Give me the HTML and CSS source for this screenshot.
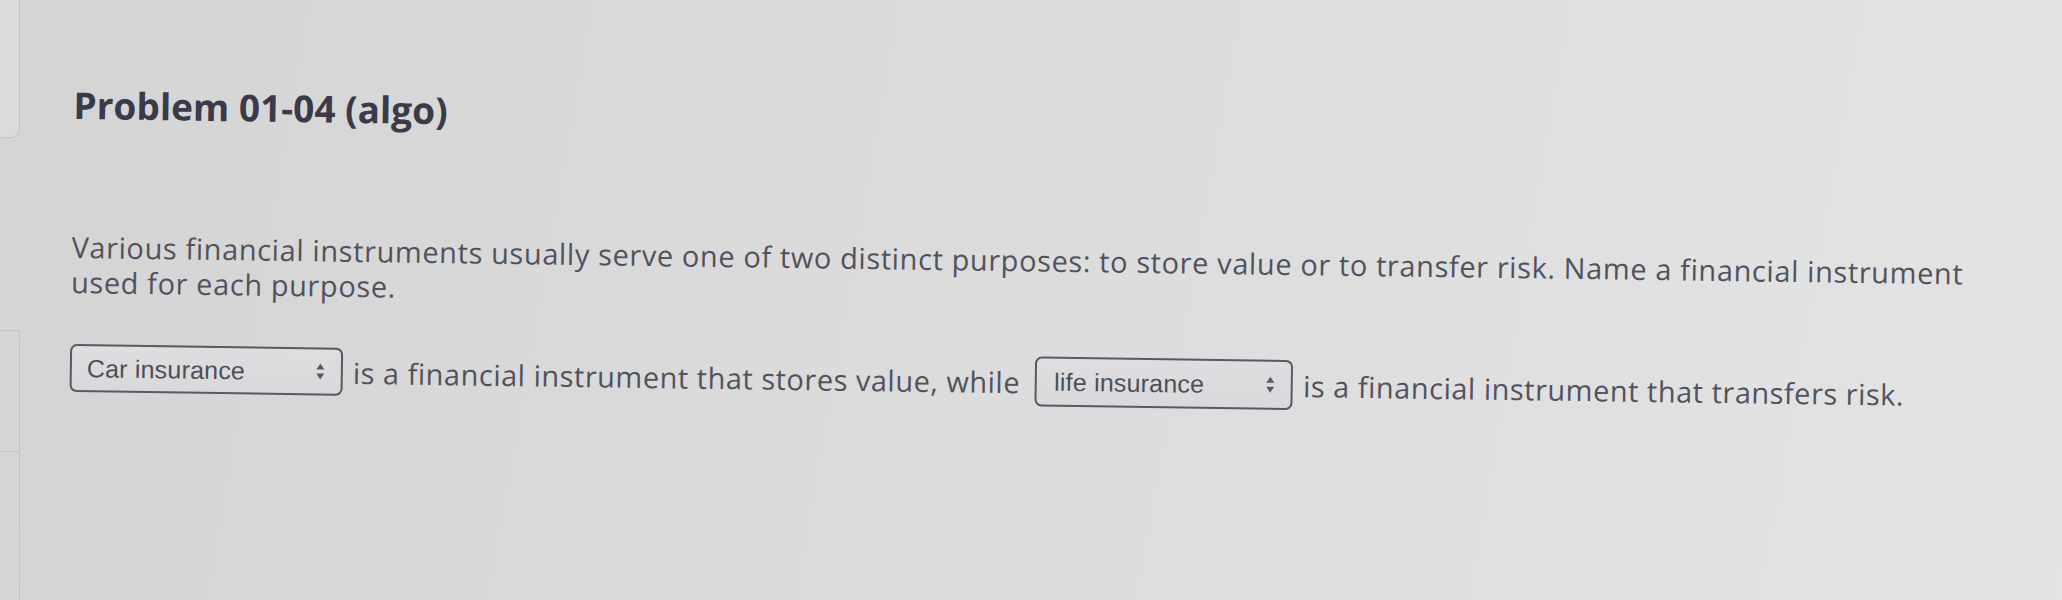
FILE: index.html
```html
<!DOCTYPE html>
<html lang="en">
<head>
<meta charset="utf-8">
<title>Problem 01-04 (algo)</title>
<link rel="stylesheet" href="styles.css">
</head>
<body>
<div class="page">
  <aside class="rail">
    <div class="rail-card rail-top"></div>
    <div class="rail-card rail-lower">
      <div class="rail-cell"></div>
      <div class="rail-cell"></div>
    </div>
  </aside>
  <main class="content">
    <h1 class="title">Problem 01-04 (algo)</h1>
    <p class="prompt">Various financial instruments usually serve one of two distinct purposes: to store value or to transfer risk. Name a financial instrument used for each purpose.</p>
    <div class="answer">
      <span class="dropdown dd-first">
        <span class="dd-value">Car insurance</span>
        <svg class="dd-arrows" viewBox="0 0 9 18" width="9" height="18" aria-hidden="true"><path d="M4.5 1 L8.5 7 L0.5 7 Z M0.5 11 L8.5 11 L4.5 17 Z"/></svg>
      </span>
      <span class="answer-text">is a financial instrument that stores value, while</span>
      <span class="dropdown dd-second">
        <span class="dd-value">life insurance</span>
        <svg class="dd-arrows" viewBox="0 0 9 18" width="9" height="18" aria-hidden="true"><path d="M4.5 1 L8.5 7 L0.5 7 Z M0.5 11 L8.5 11 L4.5 17 Z"/></svg>
      </span>
      <span class="answer-text">is a financial instrument that transfers risk.</span>
    </div>
  </main>
</div>
</body>
</html>
```

FILE: styles.css
```css
html, body {
  margin: 0;
  padding: 0;
}

body {
  width: 2062px;
  height: 600px;
  overflow: hidden;
  background: linear-gradient(100deg, #d4d4d5 0%, #dadadb 35%, #dfdfe0 70%, #e4e4e4 100%);
  font-family: "Open Sans", "Liberation Sans", sans-serif;
}

.page {
  display: flex;
  height: 600px;
}

.rail {
  width: 20px;
  flex: 0 0 20px;
  display: flex;
  flex-direction: column;
}

.rail-card {
  border-color: #c2c2c4;
  border-style: solid;
  box-sizing: border-box;
}

.rail-top {
  height: 138px;
  border-width: 0 1px 1px 0;
  border-bottom-right-radius: 9px;
  background: #dbdbdc;
}

.rail-lower {
  margin-top: 192px;
  flex: 1;
  border-width: 1px 1px 0 0;
  display: flex;
  flex-direction: column;
}

.rail-cell {
  height: 120px;
  border-bottom: 1px solid #c6c6c8;
}

.rail-cell + .rail-cell {
  border-bottom: none;
  flex: 1;
}

.content {
  padding: 83px 0 0 55px;
  transform: rotate(0.8deg);
  transform-origin: 55px 0;
}

.title {
  margin: 0;
  font-size: 37px;
  line-height: 44px;
  font-weight: 700;
  color: #3a3a48;
}

.prompt {
  margin: 102px 0 0;
  width: 1935px;
  font-size: 29px;
  line-height: 35px;
  letter-spacing: 0.6px;
  color: #52525e;
}

.answer {
  margin-top: 44px;
  display: flex;
  align-items: center;
  font-size: 29px;
  line-height: 35px;
  letter-spacing: 0.5px;
  color: #52525e;
  white-space: nowrap;
}

.answer-text {
  margin: 0 0 0 10px;
}

.dropdown {
  box-sizing: border-box;
  display: inline-flex;
  align-items: center;
  justify-content: space-between;
  height: 48px;
  border: 2px solid #575a66;
  border-radius: 7px;
  background: linear-gradient(#dedee0, #d9d9db);
  font-family: "Liberation Sans", Arial, sans-serif;
  font-size: 25px;
  letter-spacing: 0.2px;
  color: #4e4e58;
}

.dd-first {
  width: 273px;
  padding: 0 16px 0 15px;
}

.dd-second {
  width: 258px;
  height: 50px;
  margin-left: 15px;
  padding: 0 16px 0 17px;
}

.dd-arrows {
  fill: #5a5a62;
}
```
